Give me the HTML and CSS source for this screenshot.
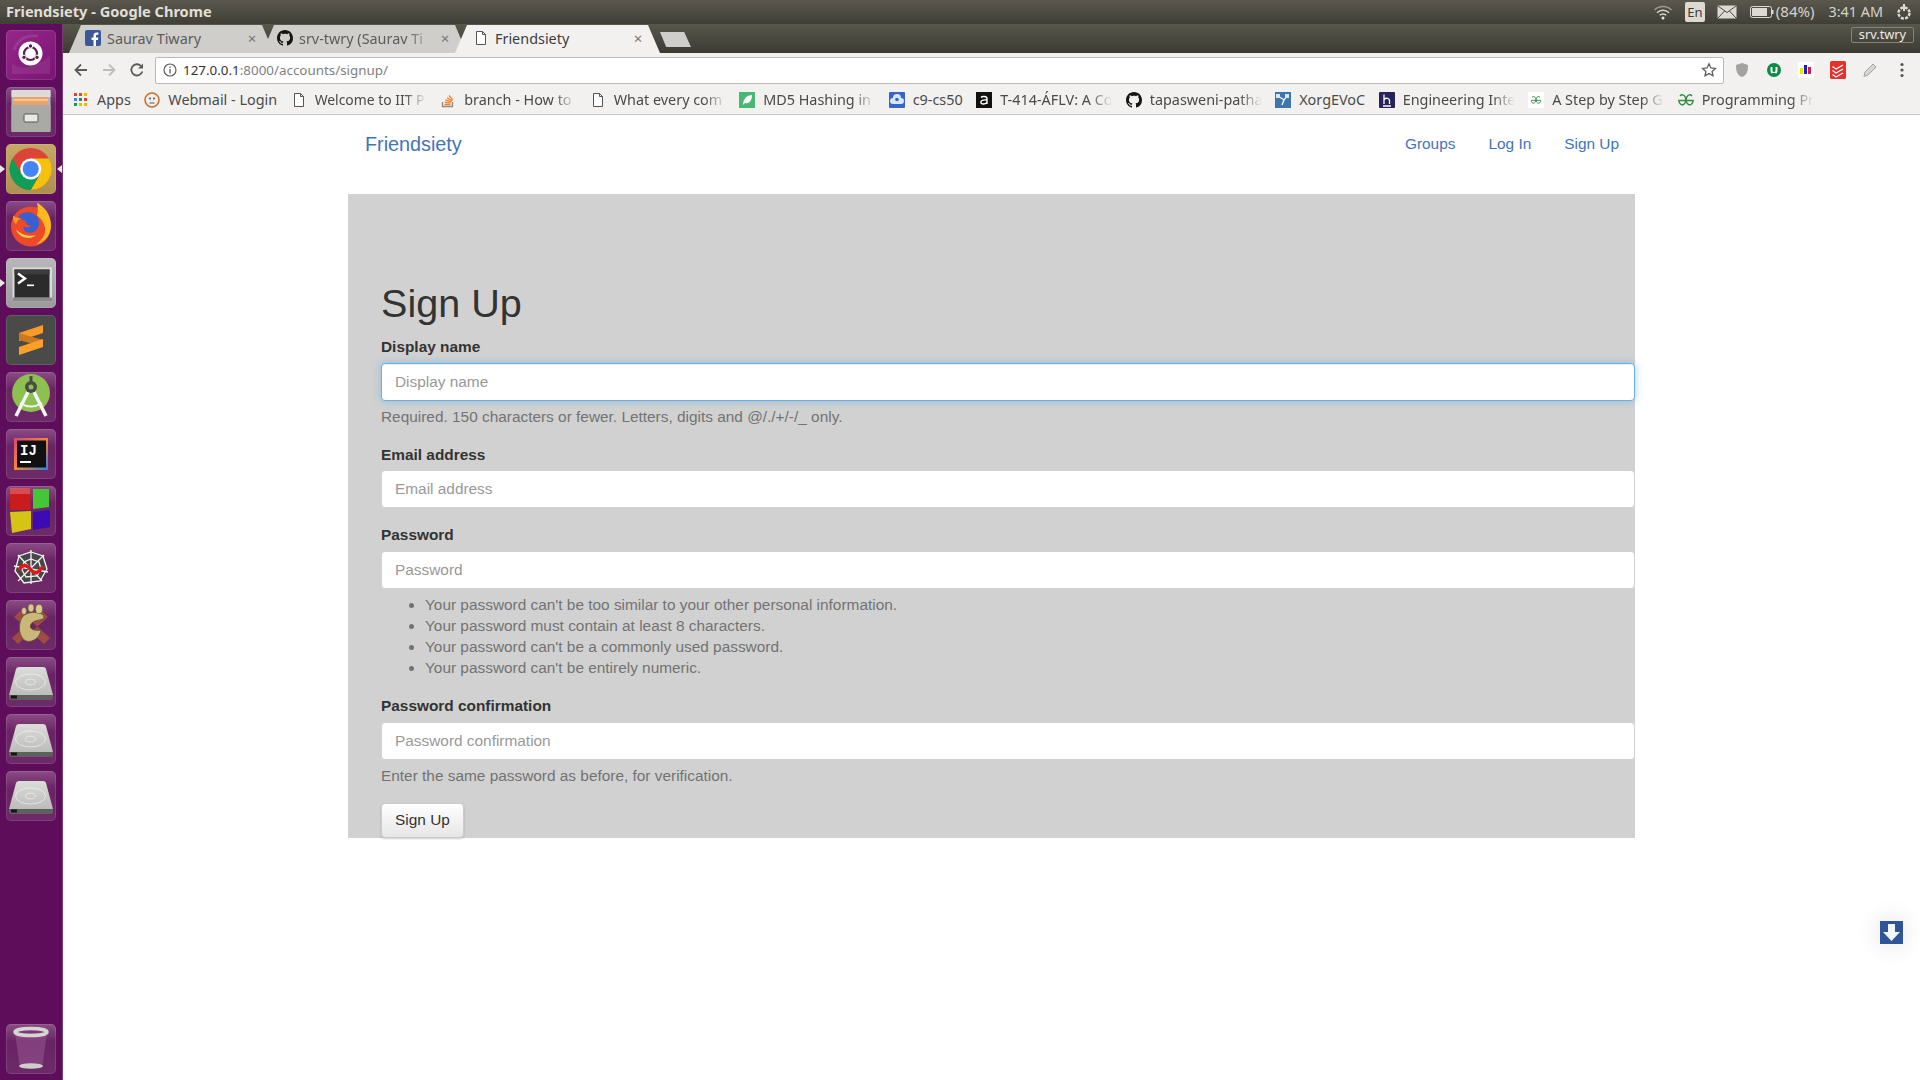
FILE: index.html
```html
<!DOCTYPE html>
<html lang="en">
<head>
<meta charset="utf-8">
<title>Friendsiety - Google Chrome</title>
<link rel="stylesheet" href="styles.css">
</head>
<body>
<svg class="defs" width="0" height="0" aria-hidden="true">
  <symbol id="doc" viewBox="0 0 16 16"><path d="M3.500 1.500h6l3 3v10h-9z" fill="#fff" stroke="#555" stroke-width="1"/><path d="M9.500 1.500v3h3" fill="none" stroke="#555"/></symbol>
  <symbol id="gh" viewBox="0 0 16 16"><path fill="#161514" d="M8 0C3.580 0 0 3.580 0 8c0 3.540 2.290 6.530 5.470 7.590.4.070.55-.17.55-.38 0-.19-.01-.82-.01-1.490-2.010.37-2.530-.49-2.690-.94-.09-.23-.48-.94-.82-1.130-.28-.15-.68-.52-.01-.53.63-.01 1.080.58 1.230.82.72 1.210 1.870.87 2.330.66.07-.52.28-.87.51-1.070-1.780-.2-3.640-.89-3.640-3.950 0-.87.31-1.590.82-2.150-.08-.2-.36-1.020.08-2.120 0 0 .67-.21 2.200.82.64-.18 1.320-.27 2-.27s1.360.09 2 .27c1.530-1.040 2.200-.82 2.200-.82.44 1.100.16 1.920.08 2.120.51.56.82 1.270.82 2.150 0 3.070-1.870 3.750-3.650 3.950.29.25.54.73.54 1.480 0 1.070-.01 1.930-.01 2.200 0 .21.15.46.55.38A8 8 0 0 0 16 8c0-4.420-3.580-8-8-8z"/></symbol>
  <symbol id="gfg" viewBox="0 0 16 16"><g fill="none" stroke="#2f8d46" stroke-width="1.400"><path d="M8 8.500H.8A3.500 5 0 1 0 2 4"/><path d="M8 8.500h7.200A3.500 5 0 1 1 14 4"/></g></symbol>
  <symbol id="disk" viewBox="0 0 50 50">
    <defs><linearGradient id="dg" x1="0" y1="0" x2="0" y2="1"><stop offset="0" stop-color="#dcdcda"/><stop offset="1" stop-color="#bcbcba"/></linearGradient></defs>
    <path d="M10 12 Q10.500 10 13 10 H37 Q39.500 10 40 12 L47 38 H3z" fill="url(#dg)"/>
    <path d="M3 38 H47 V41 Q47 43 45 43 H5 Q3 43 3 41z" fill="#5f5f5d"/>
    <rect x="5" y="38.500" width="6" height="3" fill="#161616"/>
    <ellipse cx="24.500" cy="25" rx="15" ry="8" fill="none" stroke="#ecece9" stroke-width=".8"/>
    <ellipse cx="24.500" cy="25" rx="5" ry="2.800" fill="none" stroke="#eee" stroke-width=".8"/>
  </symbol>
</svg>

<header class="topbar">
  <span class="wintitle">Friendsiety - Google Chrome</span>
  <div class="tray">
    <svg class="tray-wifi" width="20" height="16" viewBox="0 0 20 16"><g fill="none" stroke="#d8d6cf" stroke-width="1.500"><path d="M1.500 6a12 12 0 0 1 17 0" opacity=".55"/><path d="M4 8.800a8.500 8.500 0 0 1 12 0"/><path d="M6.800 11.300a4.500 4.500 0 0 1 6.400 0"/></g><circle cx="10" cy="14" r="1.500" fill="#e6e4dd"/></svg>
    <span class="tray-lang">En</span>
    <svg class="tray-mail" width="20" height="14" viewBox="0 0 20 14"><rect x=".5" y=".5" width="19" height="13" rx="1" fill="#dcdad3"/><path d="M1 1l9 6.500L19 1M1 13l6.500-7M19 13l-6.500-7" fill="none" stroke="#4a483f" stroke-width="1"/></svg>
    <svg class="tray-batt" width="24" height="14" viewBox="0 0 24 14"><rect x=".5" y="1.500" width="21" height="11" rx="2" fill="none" stroke="#dcdad3"/><rect x="2" y="3" width="15" height="8" fill="#dcdad3"/><rect x="22" y="5" width="1.500" height="4" fill="#dcdad3"/></svg>
    <span class="tray-pct">(84%)</span>
    <span class="tray-clock">3:41 AM</span>
    <svg class="tray-gear" width="18" height="18" viewBox="0 0 18 18"><circle cx="9" cy="10" r="5.500" fill="none" stroke="#dcdad3" stroke-width="2.500" stroke-dasharray="3 1.300"/><path d="M9 1v7" stroke="#dcdad3" stroke-width="2"/></svg>
  </div>
</header>

<div class="workspace">
  <nav class="launcher">
    <div class="tile tile-ubuntu"><svg viewBox="0 0 50 50"><path d="M6 34Q22 44 44 26V44H6z" fill="#fff" opacity=".08"/><path d="M8 20Q14 4 32 6" fill="none" stroke="#fff" stroke-width="3" opacity=".1"/><circle cx="24.500" cy="23.500" r="12" fill="#fff"/><circle cx="24.500" cy="23.500" r="6.500" fill="none" stroke="#5c1a55" stroke-width="2.200"/><g fill="#5c1a55" stroke="#fff" stroke-width="1"><circle cx="24.500" cy="16" r="2.200"/><circle cx="18" cy="27.300" r="2.200"/><circle cx="31" cy="27.300" r="2.200"/></g></svg></div>
    <div class="tile"><svg viewBox="0 0 50 50"><rect x="5.500" y="3" width="39" height="42" rx="2" fill="#b5b5b2"/><rect x="5.500" y="3" width="39" height="7" fill="#dcdcd9"/><rect x="8" y="10" width="34" height="9" fill="#e8a26a"/><rect x="8" y="12" width="34" height="2" fill="#f4c79b"/><rect x="5.500" y="18" width="39" height="27" fill="#a9a9a6"/><rect x="18" y="27" width="14" height="8" rx="1" fill="#e8e8e6" stroke="#555"/></svg></div>
    <div class="tile tile-chrome running-both"><svg viewBox="0 0 50 50"><g transform="translate(24.700 25)"><circle r="21" fill="#db4437"/><path d="M18.200-10.500A21 21 0 0 1 0 21L9.090 5.250 0-10.500z" fill="#f4c20d"/><path d="M-18.200-10.500A21 21 0 0 0 0 21L9.090 5.250H-9.090z" fill="#0f9d58"/><circle r="10.500" fill="#fff"/><circle r="8" fill="#4285f4"/></g></svg></div>
    <div class="tile"><svg viewBox="0 0 50 50"><g transform="translate(0 -1.500)"><circle cx="25" cy="27" r="20" fill="#ec4a2a"/><path d="M31 3c8 5 14 12 14 23 0 9-6 17-15 19 7-5 10-11 9-17-1-5-4-9-8-12 1-4 1-8 0-13z" fill="#ffb81f"/><path d="M12 17c5-6 15-5 19 0 4 6 2 14-5 16-6 1-10-3-8-6 3 2 6 1 7-1-3 0-6-2-5-5-3 0-6-2-8-4z" fill="#3a5fd0"/><path d="M10 30c3 8 13 11 20 6-7 1-14 0-20-6z" fill="#ffd24a"/><path d="M7 16c0 5 1 7 3 9 1-3 2-5 5-6-3-1-6-1-8-3z" fill="#ff9a1f"/></g></svg></div>
    <div class="tile tile-term running"><svg viewBox="0 0 50 50"><g transform="translate(0 1.500)"><rect x="6.500" y="8" width="39.500" height="34" fill="#dcdcdc"/><rect x="6.500" y="38" width="39.500" height="4" fill="#8a8a8a"/><rect x="8.500" y="10" width="35" height="28" fill="#2b2b2b"/><rect x="8.500" y="10" width="35" height="5" fill="#3c3c3c"/><path d="M12 14l7 5-7 5" fill="none" stroke="#fff" stroke-width="2.400"/><rect x="21" y="25" width="7" height="1.600" fill="#fff"/></g></svg></div>
    <div class="tile tile-sublime"><svg viewBox="0 0 50 50"><path d="M13 18L37 10V18L13 26z" fill="#f89b29"/><path d="M13 25L37 32V25L13 18z" fill="#c97a1c"/><path d="M13 32L37 24V32L13 40z" fill="#ff9f2b"/></svg></div>
    <div class="tile"><svg viewBox="0 0 50 50"><circle cx="25" cy="21" r="19" fill="#8dc04f"/><path d="M25 14L10 44M25 14L40 44" stroke="#f4f4f4" stroke-width="3.500" fill="none"/><path d="M14 31Q25 38 36 31" stroke="#f4f4f4" stroke-width="2" fill="none"/><path d="M25 4v6" stroke="#4a4a4a" stroke-width="3"/><circle cx="25" cy="15" r="6" fill="#4a4a4a"/><circle cx="25" cy="15" r="2.500" fill="#8dc04f"/></svg></div>
    <div class="tile"><svg viewBox="0 0 50 50"><defs><linearGradient id="ijg" x1="0" y1="0" x2="1" y2="1"><stop offset="0" stop-color="#e0417e"/><stop offset=".5" stop-color="#f58a2e"/><stop offset="1" stop-color="#2a7fdc"/></linearGradient></defs><rect x="8" y="9" width="34" height="32" fill="url(#ijg)"/><rect x="11" y="11.500" width="29" height="27" fill="#111"/><text class="ij-text" x="14" y="26">IJ</text><rect x="14" y="32" width="11" height="2" fill="#fff"/></svg></div>
    <div class="tile"><svg viewBox="0 0 50 50"><path d="M3.500 4L24.500 2V24L4 24z" fill="#c91c1c"/><path d="M4 2h20v6H4z" fill="#e56a6a" opacity=".6"/><path d="M27 3H43V21L27 23z" fill="#46c536"/><path d="M4 26L25 25V43L6 47z" fill="#d4c514"/><path d="M27 26L44 24V41L27 44z" fill="#3b0bb3"/></svg></div>
    <div class="tile"><svg viewBox="0 0 50 50"><path d="M25 9L37 13 41 26 34 38 18 40 9 28 13 13z" fill="#474747"/><g stroke="#f4f4f4" stroke-width="1.300" fill="none"><path d="M25 7V41M8 23L42 29M12 38L38 12M12 12L36 38"/><path d="M25 9L37 13 41 26 34 38 18 40 9 28 13 13z"/><path d="M25 16L33 19 35 26 31 33 20 34 16 27 18 19z"/></g><path d="M13 27C17 20 21 22 25 27S33 30 37 23" stroke="#e01818" stroke-width="3.500" fill="none"/></svg></div>
    <div class="tile"><svg viewBox="0 0 50 50"><path d="M8 17L14 11 44 38 38 44zM42 17L36 11 6 38 12 44z" fill="#9e4a45"/><path d="M17 16C24 10 38 12 38 17 38 21 28 19 25 24 22 30 30 31 35 30 34 38 26 43 20 41 13 38 11 24 17 16z" fill="#c9b878" stroke="#5c5230" stroke-width=".8"/><g fill="#d8ca8a" stroke="#5c5230" stroke-width=".5"><ellipse cx="18" cy="11" rx="2.500" ry="3.500"/><ellipse cx="25" cy="8" rx="3" ry="4"/><ellipse cx="33" cy="9" rx="3.500" ry="4.500"/></g></svg></div>
    <div class="tile"><svg viewBox="0 0 50 50"><use href="#disk"/></svg></div>
    <div class="tile"><svg viewBox="0 0 50 50"><use href="#disk"/></svg></div>
    <div class="tile"><svg viewBox="0 0 50 50"><use href="#disk"/></svg></div>
    <div class="tile tile-trash"><svg viewBox="0 0 50 50"><path d="M9 9H41L36 44H14z" fill="#a66ba2" opacity=".4"/><ellipse cx="25" cy="8" rx="16" ry="3.500" fill="none" stroke="#d5d5d3" stroke-width="3.500"/><ellipse cx="25" cy="42" rx="12" ry="2.800" fill="#cfcfcd"/></svg></div>
  </nav>

  <main class="window">
    <div class="tabstrip">
      <div class="tab">
        <svg class="fav" viewBox="0 0 16 16"><rect width="16" height="16" rx="2" fill="#3b5998"/><path d="M11 16V10h2l.3-2.500H11V6c0-.7.3-1.200 1.200-1.200h1.200V2.600C13 2.500 12.300 2.500 11.700 2.500 9.800 2.500 8.500 3.600 8.500 5.700v1.800H6.500V10h2v6z" fill="#fff"/></svg>
        <span class="tab-title">Saurav Tiwary</span><span class="tab-x">×</span>
      </div>
      <div class="tab tab-second">
        <svg class="fav"><use href="#gh"/></svg>
        <span class="tab-title tab-fade">srv-twry (Saurav Ti</span><span class="tab-x">×</span>
      </div>
      <div class="tab tab-active">
        <svg class="fav"><use href="#doc"/></svg>
        <span class="tab-title">Friendsiety</span><span class="tab-x">×</span>
      </div>
      <div class="newtab"></div>
      <span class="chip">srv.twry</span>
    </div>

    <div class="toolbar">
      <span class="navbtn"><svg width="16" height="16" viewBox="0 0 16 16"><path d="M14 8H3M8 2.500L2.500 8 8 13.500" fill="none" stroke="#5a5a5a" stroke-width="1.800"/></svg></span>
      <span class="navbtn"><svg width="16" height="16" viewBox="0 0 16 16"><path d="M2 8h11M8 2.500L13.500 8 8 13.500" fill="none" stroke="#bdbdbd" stroke-width="1.800"/></svg></span>
      <span class="navbtn"><svg width="16" height="16" viewBox="0 0 16 16"><path d="M13.300 9.500A5.600 5.600 0 1 1 12 4" fill="none" stroke="#5a5a5a" stroke-width="1.800"/><path d="M14 1.500V6.500H9z" fill="#5a5a5a"/></svg></span>
      <div class="omnibox">
        <svg class="omni-info" width="14" height="14" viewBox="0 0 14 14"><circle cx="7" cy="7" r="6" fill="none" stroke="#5f5f5f" stroke-width="1.200"/><path d="M7 6v4.500M7 3.400v1.500" stroke="#5f5f5f" stroke-width="1.300"/></svg>
        <span class="url"><span class="url-host">127.0.0.1</span>:8000/accounts/signup/</span>
        <svg class="omni-star" width="16" height="16" viewBox="0 0 16 16"><path d="M8 1.800l1.900 4.100 4.500.5-3.300 3 .9 4.400L8 11.600l-4 2.200.9-4.400-3.300-3 4.500-.5z" fill="none" stroke="#5f5f5f" stroke-width="1.300"/></svg>
      </div>
      <div class="exts">
        <span class="ext"><svg width="16" height="16" viewBox="0 0 16 16"><path d="M8 1l6 2c0 6-1 10-6 12C3 13 2 9 2 3z" fill="#a2a2a2"/></svg></span>
        <span class="ext"><svg width="16" height="16" viewBox="0 0 16 16"><circle cx="8" cy="8" r="7" fill="#0b8a43"/><path d="M4.500 5v3.500a3.500 3.500 0 0 0 7 0V5h-2v3.500a1.500 1.500 0 0 1-3 0V5z" fill="#fff"/><path d="M6 11l2 4 2-4z" fill="#0b8a43"/></svg></span>
        <span class="ext"><svg width="16" height="16" viewBox="0 0 16 16"><rect width="16" height="16" fill="#fff"/><rect x="2" y="6" width="3" height="6" fill="#e8e800"/><rect x="6" y="3" width="3" height="9" fill="#1c1cd8"/><rect x="10" y="5" width="3" height="7" fill="#d81c3c"/></svg></span>
        <span class="ext"><svg width="16" height="18" viewBox="0 0 16 18"><rect width="16" height="18" rx="1.500" fill="#e4322b"/><path d="M2.500 5.500L6 8l7-4M2.500 9.500L6 12l7-4M2.500 13.500L6 16l7-4" fill="none" stroke="#fff" stroke-width="1.200"/></svg></span>
        <span class="ext"><svg width="18" height="18" viewBox="0 0 18 18"><path d="M4 11L12 3l3 3-8 8-4 1.500z" fill="#d5d5d3" stroke="#a3a3a1"/></svg></span>
        <span class="ext"><svg width="4" height="16" viewBox="0 0 4 16"><g fill="#555"><circle cx="2" cy="2.500" r="1.600"/><circle cx="2" cy="8" r="1.600"/><circle cx="2" cy="13.500" r="1.600"/></g></svg></span>
      </div>
    </div>

    <div class="bookmarks">
      <div class="bm"><svg class="bm-ico bm-grid" viewBox="0 0 14 14"><g><rect width="3" height="3" fill="#db4437"/><rect x="5" width="3" height="3" fill="#db4437"/><rect x="10" width="3" height="3" fill="#f4b400"/><rect y="5" width="3" height="3" fill="#4285f4"/><rect x="5" y="5" width="3" height="3" fill="#0f9d58"/><rect x="10" y="5" width="3" height="3" fill="#db4437"/><rect y="10" width="3" height="3" fill="#0f9d58"/><rect x="5" y="10" width="3" height="3" fill="#f4b400"/><rect x="10" y="10" width="3" height="3" fill="#f4b400"/></g></svg><span class="bm-text">Apps</span></div>
      <div class="bm"><svg class="bm-ico" viewBox="0 0 16 16"><circle cx="8" cy="8" r="7" fill="#eee" stroke="#c7722a" stroke-width="1.600"/><circle cx="6" cy="6.500" r="1" fill="#555"/><circle cx="10" cy="6.500" r="1" fill="#555"/><path d="M5.500 11h5" stroke="#555"/></svg><span class="bm-text">Webmail - Login</span></div>
      <div class="bm"><svg class="bm-ico"><use href="#doc"/></svg><span class="bm-text bm-cut bm-tight">Welcome to IIT P</span></div>
      <div class="bm"><svg class="bm-ico" viewBox="0 0 16 16"><path d="M2.500 10v4.500h10V10" fill="none" stroke="#8a8a8a" stroke-width="1.300"/><path d="M4.500 12.500h6M4.700 10.300l6 .6M5.500 8l5.800 1.600M7 5.700l5.200 3M9 3.500l3.800 4.400" stroke="#f48024" stroke-width="1.300"/></svg><span class="bm-text bm-cut">branch - How to</span></div>
      <div class="bm"><svg class="bm-ico"><use href="#doc"/></svg><span class="bm-text bm-cut">What every com</span></div>
      <div class="bm"><svg class="bm-ico" viewBox="0 0 16 16"><rect width="16" height="16" fill="#47b972"/><path d="M4 13C4 7 8 3 13 3c0 6-3 9-7 8" fill="#fff"/></svg><span class="bm-text bm-cut">MD5 Hashing in</span></div>
      <div class="bm"><svg class="bm-ico" viewBox="0 0 16 16"><rect width="16" height="16" rx="1" fill="#3764c9"/><path d="M4 12a3 3 0 0 1 0-6 4 4 0 0 1 8 0 3 3 0 0 1 0 6z" fill="#dbe6fa"/><circle cx="8" cy="7.500" r="1.800" fill="#3764c9"/></svg><span class="bm-text">c9-cs50</span></div>
      <div class="bm"><svg class="bm-ico" viewBox="0 0 16 16"><rect width="16" height="16" fill="#111"/><path d="M5 5.500C6 4 11 4 11 6.500V12M11 8C7 7.500 4.800 8.500 4.800 10.300S8.500 13 11 10.500" fill="none" stroke="#fff" stroke-width="1.400"/></svg><span class="bm-text bm-cut">T-414-ÁFLV: A Co</span></div>
      <div class="bm"><svg class="bm-ico"><use href="#gh"/></svg><span class="bm-text bm-cut">tapasweni-patha</span></div>
      <div class="bm"><svg class="bm-ico" viewBox="0 0 16 16"><rect width="16" height="16" fill="#3d76ae"/><path d="M3 4l6 4 4-5M9 8l-2 5" stroke="#fff" stroke-width="1.300" fill="none"/><rect x="1" y="2" width="4" height="4" fill="#dbe6f2"/><rect x="10" y="2" width="4" height="4" fill="#dbe6f2"/></svg><span class="bm-text">XorgEVoC</span></div>
      <div class="bm"><svg class="bm-ico" viewBox="0 0 16 16"><rect width="16" height="16" rx="1" fill="#29235c"/><path d="M5 2.500V12M5 7.500C7 5.500 10.500 6 10.500 8.500V12M4 14h8" stroke="#fff" stroke-width="1.300" fill="none"/></svg><span class="bm-text bm-cut">Engineering Inte</span></div>
      <div class="bm"><svg class="bm-ico" viewBox="-4 -4 24 24"><rect x="-4" y="-4" width="24" height="24" fill="#fff"/><use href="#gfg" width="16" height="16"/></svg><span class="bm-text bm-cut">A Step by Step G</span></div>
      <div class="bm"><svg class="bm-ico"><use href="#gfg"/></svg><span class="bm-text bm-cut">Programming Pr</span></div>
    </div>

    <div class="page">
      <div class="container">
        <div class="navbar">
          <a class="brand" href="#">Friendsiety</a>
          <div class="navlinks">
            <a href="#">Groups</a>
            <a href="#">Log In</a>
            <a href="#">Sign Up</a>
          </div>
        </div>
        <section class="panel">
          <h1>Sign Up</h1>
          <form class="form">
            <div class="group group-first">
              <label class="label-first" for="f1">Display name</label>
              <input id="f1" class="field field-focus" type="text" placeholder="Display name">
              <p class="help help-first">Required. 150 characters or fewer. Letters, digits and @/./+/-/_ only.</p>
            </div>
            <div class="group">
              <label for="f2">Email address</label>
              <input id="f2" class="field" type="text" placeholder="Email address">
            </div>
            <div class="group">
              <label for="f3">Password</label>
              <input id="f3" class="field" type="text" placeholder="Password">
              <ul class="help-list">
                <li>Your password can't be too similar to your other personal information.</li>
                <li>Your password must contain at least 8 characters.</li>
                <li>Your password can't be a commonly used password.</li>
                <li>Your password can't be entirely numeric.</li>
              </ul>
            </div>
            <div class="group group-last">
              <label for="f4">Password confirmation</label>
              <input id="f4" class="field" type="text" placeholder="Password confirmation">
              <p class="help">Enter the same password as before, for verification.</p>
            </div>
            <button class="btn" type="button">Sign Up</button>
          </form>
        </section>
      </div>
      <div class="dl-float"><svg width="23" height="23" viewBox="0 0 23 23"><rect width="23" height="23" fill="#2f5597"/><path d="M8 3h7v8h5l-8.500 9L3 11h5z" fill="#f2f5fa"/></svg></div>
    </div>
  </main>
</div>
</body>
</html>
```

FILE: styles.css
```css
* { box-sizing: border-box; }
html, body { margin: 0; height: 1080px; overflow: hidden; }
body { display: flex; flex-direction: column; background: #fff; font-family: "Liberation Sans", Arial, sans-serif; }
.defs { position: absolute; }

/* desktop top panel */
.topbar { height: 24px; flex: none; display: flex; align-items: center; padding-left: 6px; background: linear-gradient(#5a584d, #403f37); color: #e2dfd7; font-family: "Noto Sans", sans-serif; }
.wintitle { font-size: 14.600px; font-weight: 700; white-space: nowrap; margin-bottom: 2px; }
.tray { margin-left: auto; display: flex; align-items: center; height: 24px; font-size: 14.400px; color: #d6d3ca; }
.tray-wifi { margin-right: 12px; }
.tray-lang { width: 20px; height: 20px; background: #dcdad3; color: #3c3b33; border-radius: 2px; font-size: 13px; text-align: center; line-height: 20px; margin-right: 12px; }
.tray-mail { margin-right: 13px; }
.tray-batt { margin-right: 2px; }
.tray-pct { margin: 0 14px 2px 0; font-size: 15px; }
.tray-clock { margin: 0 12px 2px 0; }
.tray-gear { margin-right: 7px; }

.workspace { flex: 1; display: flex; min-height: 0; }

/* launcher */
.launcher { width: 63px; flex: none; display: flex; flex-direction: column; gap: 7px; padding: 6px 0 6px 6px; background: #5e0d5a; border-right: 1px solid #7a3a76; }
.tile { position: relative; width: 50px; height: 50px; border-radius: 5px; background: linear-gradient(#8a4d85, #6a2365 35%, #6d2a68); box-shadow: inset 0 0 0 1px rgba(255,255,255,.12); }
.tile svg { display: block; width: 50px; height: 50px; }
.tile-ubuntu { background: linear-gradient(135deg, #94288a, #7c1474); }
.tile-chrome { background: linear-gradient(#c6a866, #ad8f52); }
.tile-term { background: linear-gradient(#b9b7b9, #9c9a9c); }
.tile-sublime { background: #4a4a48; }
.tile-trash { margin-top: auto; }
.running::before, .running-both::before { content: ""; position: absolute; left: -6px; top: 21px; border: 4px solid transparent; border-left: 5px solid #e8e8e8; border-right: 0; }
.running-both::after { content: ""; position: absolute; right: -6px; top: 21px; border: 4px solid transparent; border-right: 5px solid #e8e8e8; border-left: 0; }
.ij-text { font-family: "Liberation Mono", monospace; font-weight: 700; font-size: 14px; fill: #fff; }

/* browser window */
.window { flex: 1; min-width: 0; display: flex; flex-direction: column; }
.tabstrip { height: 29px; flex: none; display: flex; align-items: flex-start; padding: 1px 6px 0 6px; background: linear-gradient(#58574c, #3c3b33); font-family: "Noto Sans", sans-serif; }
.tab { width: 205px; height: 28px; margin-right: -12px; padding: 0 17px 2px 16px; display: flex; align-items: center; gap: 6px; background: #cfcecb; clip-path: polygon(0 100%, 12px 0, calc(100% - 12px) 0, 100% 100%); color: #5c5c5c; font-size: 14.400px; }
.tab-second { padding-left: 15px; }
.tab-active { margin-right: 0; position: relative; background: #f2f1f0; color: #3c3c3c; padding-left: 18px; }
.fav { width: 16px; height: 16px; flex: none; }
.tab-title { flex: 1; min-width: 0; white-space: nowrap; overflow: hidden; }
.tab-fade { -webkit-mask-image: linear-gradient(to right, #000 80%, transparent); mask-image: linear-gradient(to right, #000 80%, transparent); }
.tab-x { width: 10px; text-align: center; color: #777; font-size: 15px; line-height: 1; }
.newtab { width: 31px; height: 15px; margin-top: 7px; background: #cfcecb; clip-path: polygon(0 0, 78% 0, 100% 100%, 20% 100%); }
.chip { margin-left: auto; margin-top: 2px; margin-right: 0; width: 63px; height: 16px; border: 1px solid #85837a; border-radius: 2px; color: #ecebe6; font-size: 12.800px; line-height: 13px; text-align: center; }

.toolbar { height: 33px; flex: none; display: flex; align-items: center; padding: 1px 0 0 4px; background: #f2f1f0; font-family: "Noto Sans", sans-serif; }
.navbtn { width: 28px; height: 28px; display: flex; align-items: center; justify-content: center; flex: none; }
.omnibox { width: 1569px; height: 27px; margin-left: 4px; flex: none; display: flex; align-items: center; padding: 0 6px 0 7px; background: #fff; border: 1px solid #b9b9b6; border-radius: 2px; }
.omni-info { flex: none; }
.url { margin-left: 6px; font-size: 13.400px; color: #808080; white-space: nowrap; }
.url-host { color: #333; }
.omni-star { margin-left: auto; }
.exts { display: flex; margin-left: 2px; }
.ext { width: 32px; height: 24px; display: flex; align-items: center; justify-content: center; }

.bookmarks { height: 29px; flex: none; display: flex; align-items: center; gap: 13.500px; padding: 0 0 1px 10px; background: #f2f1f0; border-bottom: 1px solid #c9c9c7; font-family: "Noto Sans", sans-serif; font-size: 14.400px; color: #4a4a4a; overflow: hidden; }
.bm { display: flex; align-items: center; gap: 8px; flex: none; }
.bm-ico { width: 16px; height: 16px; flex: none; }
.bm-grid { width: 14px; height: 14px; margin: 0 1px; }
.bm-text { white-space: nowrap; }
.bm-cut { width: 112px; overflow: hidden; -webkit-mask-image: linear-gradient(to right, #000 80%, transparent); mask-image: linear-gradient(to right, #000 80%, transparent); }
.bm-tight { font-size: 13.900px; }

/* page */
.page { flex: 1; position: relative; background: #fff; min-height: 0; }
.container { width: 1287px; margin: 0 auto; }
.navbar { height: 58px; margin-bottom: 21px; padding: 0 16px 0 17px; display: flex; align-items: center; justify-content: space-between; }
.navbar a { text-decoration: none; color: #3f74c0; }
.brand { font-size: 19.800px; }
.navlinks { display: flex; gap: 33px; font-size: 15.400px; padding-bottom: 1px; }
.panel { background: #d1d1d1; padding: 87px 0 0 33px; }
h1 { margin: 0 0 11px; font-size: 39.600px; font-weight: 400; line-height: 44px; color: #333; }
.group { margin-bottom: 16px; font-size: 15.400px; line-height: 21px; }
.group-first { margin-bottom: 16.500px; }
.group-last { margin-bottom: 16.500px; }
label { display: block; margin-bottom: 5.500px; font-weight: 700; color: #333; }
.label-first { margin-bottom: 6px; }
.field { display: block; width: 100%; height: 38px; padding: 0 13px; background: #fff; border: 1px solid #d1d1d1; border-radius: 4px; font: inherit; color: #555; }
.field::placeholder { color: #999; opacity: 1; }
.field-focus { border-color: #66afe9; box-shadow: inset 0 1px 1px rgba(0,0,0,.075), 0 0 8px rgba(102,175,233,.6); outline: 0; }
.help { margin: 5.500px 0 0; color: #737373; }
.help-first { margin-top: 5px; }
.help-list { margin: 5.500px 0 17px; padding-left: 44px; color: #737373; }
.btn { display: block; width: 83px; height: 35px; padding: 0; background: linear-gradient(#fff, #e6e6e6); border: 1px solid #ccc; border-radius: 4px; box-shadow: 0 1px 2px rgba(0,0,0,.2); font: 15.400px "Liberation Sans", Arial, sans-serif; color: #333; }
.dl-float { position: absolute; right: 17px; top: 806px; width: 23px; height: 23px; box-shadow: 0 0 24px rgba(0,0,0,.14); }
.dl-float svg { display: block; }
```
